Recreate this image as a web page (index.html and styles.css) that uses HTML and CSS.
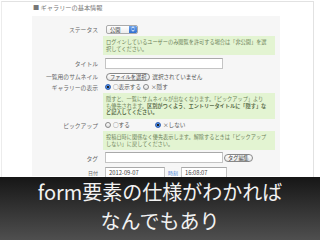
FILE: index.html
```html
<!DOCTYPE html>
<html lang="ja">
<head>
<meta charset="utf-8">
<link rel="stylesheet" href="styles.css">
</head>
<body>
<div class="slide">
  <div class="shot">
    <div class="heading">■ ギャラリーの基本情報</div>
    <div class="panel">
      <div class="row r-status">
        <div class="label">ステータス</div>
        <div class="field"><span class="select"><span class="sel-text">公開</span><span class="sel-arrow"><svg width="4" height="6" viewBox="0 0 4 6"><path d="M0.5 2.3L2 0.7L3.5 2.3M0.5 3.7L2 5.3L3.5 3.7" fill="none" stroke="#fff" stroke-width="0.9"/></svg></span></span></div>
      </div>
      <div class="help h1">ログインしているユーザーのみ閲覧を許可する場合は「非公開」を選<br>択してください。</div>
      <div class="row r-title">
        <div class="label">タイトル</div>
        <div class="field"><span class="input wide"></span></div>
      </div>
      <div class="row r-thumb">
        <div class="label">一覧用のサムネイル</div>
        <div class="field"><span class="btn">ファイルを選択</span><span class="plain">選択されていません</span></div>
      </div>
      <div class="row r-show">
        <div class="label">ギャラリーの表示</div>
        <div class="field"><span class="radio on"></span><span class="plain">○表示する</span><span class="radio"></span><span class="plain">×隠す</span></div>
      </div>
      <div class="help h2">隠すと、一覧にサムネイルが出なくなります。「ピックアップ」より<br>も優先されます。<b>区別がつくよう、エントリータイトルに「隠す」な<br>ど記入してください。</b></div>
      <div class="row r-pick">
        <div class="label">ピックアップ</div>
        <div class="field"><span class="radio"></span><span class="plain w1">○する</span><span class="radio on"></span><span class="plain">×しない</span></div>
      </div>
      <div class="help h3">投稿日時に関係なく優先表示します。解除するときは「ピックアップ<br>しない」に戻してください。</div>
      <div class="row r-tag">
        <div class="label">タグ</div>
        <div class="field"><span class="input wide"></span><span class="btn tagbtn">タグ編集</span></div>
      </div>
      <div class="row r-date">
        <div class="label small">日付</div>
        <div class="field"><span class="input date">2012-09-07</span><span class="time-label">時刻</span><span class="input time">16:08:07</span></div>
      </div>
    </div>
  </div>
  <div class="caption">
    <div class="line">form要素の仕様がわかれば</div>
    <div class="line">なんでもあり</div>
  </div>
</div>
</body>
</html>
```
FILE: styles.css
```css
* { box-sizing: border-box; }
html, body { margin: 0; padding: 0; }
body {
  width: 320px;
  height: 240px;
  overflow: hidden;
  font-family: "Noto Sans CJK JP", "Noto Sans", sans-serif;
  background: #fff;
}
.slide {
  width: 320px;
  height: 240px;
  display: flex;
  flex-direction: column;
  background: #fff;
}
.shot {
  height: 176px;
  margin: 1px 6px 0 1px;
  border-top: 1px solid #e2e2e2;
  border-left: 1px solid #ececec;
  border-right: 1px solid #e2e2e2;
  background: #fff;
  overflow: hidden;
  flex: none;
}
.heading {
  font-size: 6.2px;
  line-height: 8px;
  color: #777;
  padding: 2px 0 0 31px;
  height: 14px;
}
.panel {
  margin-left: 30px;
  width: 248px;
  background: #f6f6f6;
  padding: 8px 0 0 0;
  height: 160px;
}
.row {
  display: flex;
  align-items: center;
}
.label {
  width: 66px;
  flex: none;
  text-align: right;
  font-size: 5.8px;
  line-height: 7px;
  color: #666;
}
.label.small { font-size: 5px; }
.field {
  display: flex;
  align-items: center;
  margin-left: 7px;
  font-size: 5.6px;
  color: #555;
}
.r-status { height: 10px; }
.r-title { height: 11px; margin-top: 3px; }
.r-thumb { height: 9px; margin-top: 3px; }
.r-show { height: 8px; margin-top: 2px; }
.r-pick { height: 8px; margin-top: 2px; }
.r-tag { height: 12px; margin-top: 2px; align-items: flex-start; }
.r-tag .label { margin-top: 3px; }
.r-date { height: 12px; margin-top: 2px; }

.select {
  display: flex;
  width: 32px;
  height: 9px;
  margin-left: 1px;
  border: 1px solid #aaa;
  border-radius: 2px;
  background: linear-gradient(#fff, #ececec);
  overflow: hidden;
}
.sel-text {
  flex: 1;
  font-size: 5.2px;
  line-height: 7px;
  padding-left: 3px;
  color: #333;
}
.sel-arrow {
  width: 8px;
  background: linear-gradient(#6fa4ea, #2f6fd0);
  display: flex;
  align-items: center;
  justify-content: center;
  border-radius: 0 1px 1px 0;
}
.help {
  margin: 2px 0 0 71px;
  width: 172px;
  background: #e3f4d2;
  color: #6c8158;
  font-size: 5.2px;
  line-height: 6.5px;
  padding: 3px;
}
.help b { font-weight: bold; color: #5d6f4c; }
.h1 { height: 19px; }
.h2 { height: 26px; margin-top: 2px; }
.h3 { height: 19px; margin-top: 2px; }
.input {
  display: block;
  height: 11px;
  border: 1px solid #c4c4c4;
  border-top-color: #a9a9a9;
  background: #fff;
  font-size: 5.8px;
  line-height: 9px;
  color: #444;
  padding-left: 3px;
}
.input.wide { width: 118px; }
.input.date { width: 60px; height: 11px; }
.input.time { width: 46px; height: 11px; }
.time-label {
  color: #3f7fd6;
  font-size: 5px;
  margin: 0 3px;
}
.btn {
  display: inline-block;
  height: 8px;
  border: 1px solid #888;
  border-radius: 4px;
  background: linear-gradient(#fff, #e6e6e6);
  font-size: 5.2px;
  line-height: 6px;
  padding: 0 3px;
  color: #444;
  margin-left: 1px;
}
.tagbtn { margin-left: 1px; }
.plain { margin-left: 2px; margin-right: 2px; }
.plain.w1 { width: 40px; }
.radio {
  display: inline-block;
  width: 6px;
  height: 6px;
  border-radius: 50%;
  border: 1px solid #888;
  background: linear-gradient(#fff, #ddd);
  flex: none;
}
.radio.on {
  border-color: #2c5fb5;
  background: radial-gradient(circle, #222 0 1px, #5b95e6 1.3px, #2f6fd0);
}
.caption {
  flex: 1;
  background: linear-gradient(#161616, #4f4f4f);
  color: #f2f2f2;
  text-align: center;
  font-size: 20px;
  line-height: 29px;
  padding-top: 0;
}
.line { white-space: nowrap; }
```
